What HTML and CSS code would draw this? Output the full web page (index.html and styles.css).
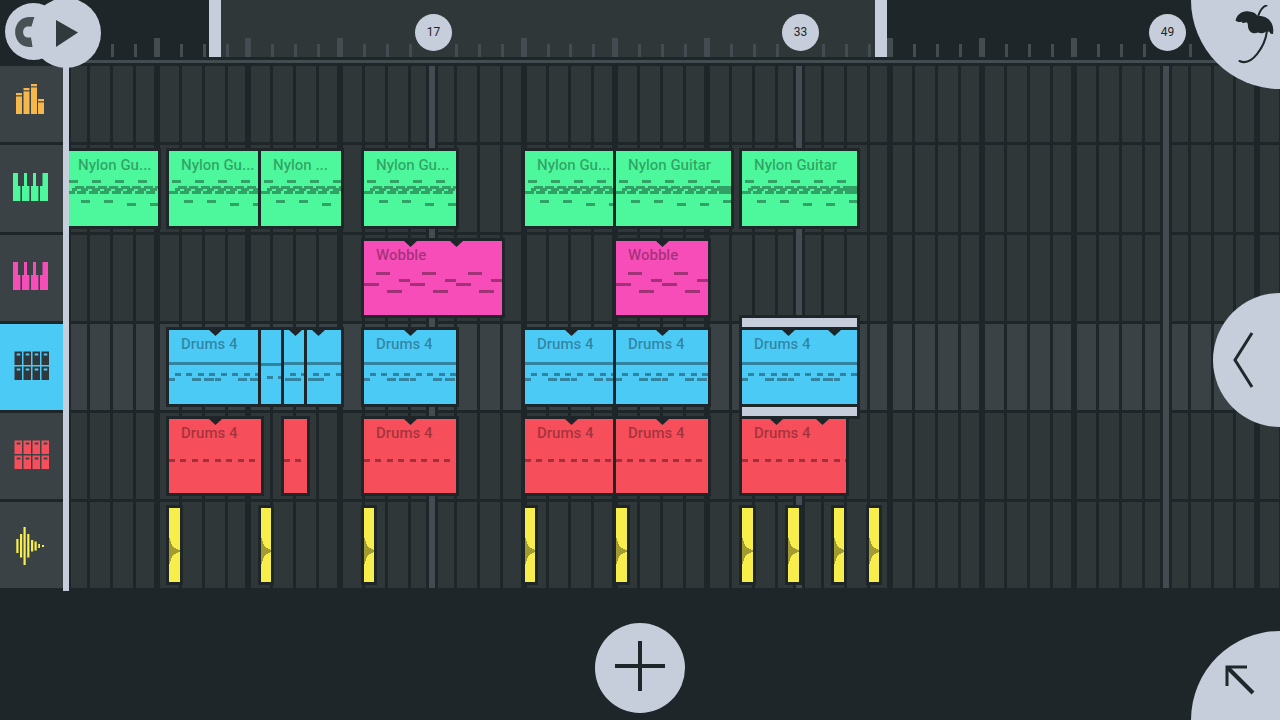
FILE: index.html
```html
<!DOCTYPE html>
<html lang="en">
<head>
    <meta charset="UTF-8">
    <meta name="viewport" content="width=device-width, initial-scale=1.0">
    <title>Playlist</title>
    <link rel="stylesheet" href="styles.css">
</head>
<body>
    <main class="arranger">
        <div class="ruler-head"></div>
        <div class="ruler">
            <div class="ticks" id="ticks"></div>
            <div class="divider"></div>
        </div>

        <div class="track-heads">
            <button class="head head-first orange" aria-label="Mixer">
                <svg width="37" height="40" viewBox="0 0 37 40">
                    <path d="M3 9h6v2h-6zM10.500 4h6v2h-6zM18 0h6v2h-6zM25 15h6v2h-6z"/>
                    <path d="M3 12.500h6v17.500h-6zM10.500 7.500h6v22.500h-6zM18 3.500h6v26.500h-6zM25 18.500h6v11.500h-6z"/>
                    <path opacity=".3" d="M3 11h6v1.500h-6zM10.500 6h6v1.500h-6zM18 2h6v1.500h-6zM25 17h6v1.500h-6z"/>
                </svg>
            </button>
            <button class="head green" aria-label="Nylon Guitar track">
                <svg width="37" height="40" viewBox="0 0 37 40">
                    <path d="M0 4h5v13h2.400v15H0zM11 4h3v13h2.400v15H9V17h2zM20 4h3v13h2.400v15H18V17h2zM29.500 4H35v28h-8V17h2.500z"/>
                </svg>
            </button>
            <button class="head pink" aria-label="Wobble track">
                <svg width="37" height="40" viewBox="0 0 37 40">
                    <path d="M0 4h5v13h2.400v15H0zM11 4h3v13h2.400v15H9V17h2zM20 4h3v13h2.400v15H18V17h2zM29.500 4H35v28h-8V17h2.500z"/>
                </svg>
            </button>
            <button class="head blue selected" aria-label="Drums 4 track, selected">
                <svg width="37" height="40" viewBox="0 0 37 40">
                    <path fill-rule="evenodd" d="M1.500 4.500h7.500v13.500h-7.500zM3.700 6.500v2h3.600v-2zM10.500 4.500h7.500v13.500h-7.500zM12.700 6.500v2h3.600v-2zM19.500 4.500h7.500v13.500h-7.500zM21.700 6.500v2h3.600v-2zM28.500 4.500h7.500v13.500h-7.500zM30.700 6.500v2h3.600v-2zM1.500 19.500h7.500v13.500h-7.500zM3.700 21.500v2h3.600v-2zM10.500 19.500h7.500v13.500h-7.500zM12.700 21.500v2h3.600v-2zM19.500 19.500h7.500v13.500h-7.500zM21.700 21.500v2h3.600v-2zM28.500 19.500h7.500v13.500h-7.500zM30.700 21.500v2h3.600v-2z"/>
                </svg>
            </button>
            <button class="head red" aria-label="Drums 4 track">
                <svg width="37" height="40" viewBox="0 0 37 40">
                    <path fill-rule="evenodd" d="M1.500 4.500h7.500v13.500h-7.500zM3.700 6.500v2h3.600v-2zM10.500 4.500h7.500v13.500h-7.500zM12.700 6.500v2h3.600v-2zM19.500 4.500h7.500v13.500h-7.500zM21.700 6.500v2h3.600v-2zM28.500 4.500h7.500v13.500h-7.500zM30.700 6.500v2h3.600v-2zM1.500 19.500h7.500v13.500h-7.500zM3.700 21.500v2h3.600v-2zM10.500 19.500h7.500v13.500h-7.500zM12.700 21.500v2h3.600v-2zM19.500 19.500h7.500v13.500h-7.500zM21.700 21.500v2h3.600v-2zM28.500 19.500h7.500v13.500h-7.500zM30.700 21.500v2h3.600v-2z"/>
                </svg>
            </button>
            <button class="head yellow" aria-label="Audio track">
                <svg width="37" height="40" viewBox="0 0 37 40">
                    <path d="M3.300 14h2.200v14h-2.200zM7 9h2.200v23.400h-2.200zM10.500 2h2.200v38h-2.200zM14.200 9h2.200v23.400h-2.200zM18 15h2.200v11.500h-2.200zM21.500 16.500h2.200v9h-2.200zM25.200 19h1.800v4h-1.800zM29 20h2v2h-2z"/>
                </svg>
            </button>
            <div class="playhead"></div>
        </div>

        <div class="lanes">
            <div class="lane lane-first"></div>
            <div class="lane green" data-track="guitar"></div>
            <div class="lane pink" data-track="wobble"></div>
            <div class="lane blue selected" data-track="drums"></div>
            <div class="lane red" data-track="kick"></div>
            <div class="lane yellow" data-track="audio"></div>
            <div class="grid" id="grid"></div>
        </div>
    </main>

    <footer>
        <button class="round add" aria-label="Add track">
            <svg width="50" height="50" viewBox="0 0 50 50"><path d="M25 0v50M0 25h50"/></svg>
        </button>
    </footer>

    <button class="round snap" aria-label="Snap">
        <svg width="20" height="30" viewBox="0 0 20 30">
            <path d="M19.500 0L17 9.500h-4C6.500 9.500 6.500 20.500 13 20.500h3.200L17.500 30H14C-4.500 29-4.500 1 14 0z"/>
        </svg>
    </button>
    <button class="round play" aria-label="Play">
        <svg width="22" height="27" viewBox="0 0 22 27"><path d="M0 0l22 12.500L0 27z"/></svg>
    </button>
    <button class="round corner song" aria-label="Song menu">
        <svg width="40" height="60" viewBox="0 0 40 60">
            <path d="M.500 15.500C1.500 9.500 8 5 14 6.500c4 .200 7 1.800 8.500 4.500 6-.500 12 2 14.500 8 1.500 4 1.500 7 1 10l-2.500-.300c-.500-2-2-2.700-4-2.500-3 2.500-6 2.500-8.500 1.300-4 1.500-8 .500-9.500-3.500-1-3 0-5-1.500-6.500-1.500-.500-3 .700-5 .500l.500-1.500c-2 .700-4.500 1-7-1z"/>
            <path class="line" d="M31.500.500c-4.500 1-6.500 5-8.500 11M32 26C30 41 17 62 4.500 56"/>
        </svg>
    </button>
    <button class="round side" aria-label="Open side panel">
        <svg width="22" height="56" viewBox="0 0 22 56"><path d="M19 1L2 28l17 27"/></svg>
    </button>
    <button class="round corner tools" aria-label="Select tool">
        <svg width="30" height="30" viewBox="0 0 30 30">
            <path d="M2 21V2h20"/>
            <path class="shaft" d="M3 3l25 25"/>
        </svg>
    </button>

    <script src="script.js"></script>
</body>
</html>
```

FILE: styles.css
```css
/* General Reset */
* {
    margin: 0;
    padding: 0;
    box-sizing: border-box;
}

:root {
    --bg: #1f2629;
    --cell: #2f3739;
    --panel: #3a4246;
    --line: #434c50;
    --light: #c7cedb;
}

body {
    display: flex;
    flex-direction: column;
    position: relative;
    min-height: 100vh;
    overflow: hidden;
    background-color: var(--bg);
    font-family: Roboto, sans-serif;
}

button {
    border: none;
    font-family: inherit;
    cursor: pointer;
}

svg {
    display: block;
    flex-shrink: 0;
}

/* Track colors */
.orange { --tint: #f7b84b; }
.green { --tint: #4cf89b; }
.pink { --tint: #f74db8; }
.blue { --tint: #4ccaf6; }
.red { --tint: #f74e5b; }
.yellow { --tint: #f8ee4b; }

/* Arranger */
.arranger {
    display: grid;
    grid-template-columns: 66px 1fr;
}

.ruler {
    position: relative;
    overflow: hidden;
    padding-bottom: 3px;
}

.ticks {
    position: relative;
    height: 57px;
    margin-bottom: 3px;
}

.tick {
    position: absolute;
    bottom: 0;
    width: 3px;
    height: 13px;
    background-color: var(--line);
}

.tick.big {
    width: 6px;
    height: 19px;
}

.loop {
    position: absolute;
    top: 0;
    height: 57px;
    background-color: var(--cell);
}

.loop-end {
    position: absolute;
    top: 0;
    width: 12px;
    height: 57px;
    background-color: var(--light);
}

.bar-number {
    position: absolute;
    top: 14px;
    width: 37px;
    height: 37px;
    border-radius: 50%;
    background-color: var(--light);
    color: #1f2629;
    font-size: 12px;
    line-height: 37px;
    text-align: center;
}

.divider {
    height: 3px;
    background-color: var(--line);
}

/* Track headers */
.track-heads {
    position: relative;
    display: flex;
    flex-direction: column;
    gap: 3px;
    padding-right: 3px;
}

.head {
    display: flex;
    justify-content: center;
    align-items: center;
    height: 86px;
    background-color: var(--panel);
}

.head.green {
    height: 87px;
}

.head-first {
    height: 76px;
}

.head svg {
    fill: var(--tint);
}

.head.selected {
    background-color: var(--tint);
}

.head.selected svg {
    fill: #30383b;
}

.playhead {
    position: absolute;
    top: 0;
    right: -3px;
    bottom: -3px;
    width: 6px;
    background-color: var(--light);
    z-index: 3;
}

/* Lanes */
.lanes {
    position: relative;
    display: flex;
    flex-direction: column;
    gap: 3px;
    overflow: hidden;
}

.lane {
    position: relative;
    height: 86px;
    background-color: var(--cell);
}

.lane.green {
    height: 87px;
}

.lane.lane-first {
    height: 76px;
}

.lane.selected {
    background-color: var(--panel);
}

.grid {
    position: absolute;
    inset: 0;
}

.grid-line {
    position: absolute;
    top: 0;
    bottom: 0;
    width: 3px;
    background-color: var(--bg);
}

.grid-line.beat {
    width: 6px;
}

.grid-line.major {
    width: 12px;
    border: solid var(--bg);
    border-width: 0 3px;
    background-color: var(--line);
}

/* Clips */
.clip {
    position: absolute;
    top: 6px;
    bottom: 6px;
    z-index: 1;
    background-color: var(--tint);
    box-shadow: 0 0 0 3px var(--bg);
    text-align: left;
}

.clip-label {
    position: absolute;
    top: 0;
    left: 12px;
    color: rgba(0, 0, 0, 0.35);
    font-size: 15px;
    font-weight: 500;
    line-height: 28px;
    white-space: nowrap;
}

.clip svg {
    position: absolute;
    top: 0;
    left: 0;
    width: 100%;
    height: 100%;
    overflow: hidden;
    fill: rgba(0, 0, 0, 0.35);
}

.clip svg .notch {
    fill: var(--bg);
}

.clip.active {
    z-index: 2;
}

.clip.active::before,
.clip.active::after {
    content: "";
    position: absolute;
    left: 0;
    right: 0;
    height: 9px;
    background-color: var(--light);
    box-shadow: 0 0 0 3px var(--bg);
}

.clip.active::before {
    top: -12px;
}

.clip.active::after {
    bottom: -12px;
}

/* Footer */
footer {
    display: flex;
    justify-content: center;
    padding-top: 35px;
}

/* Round buttons */
.round {
    display: flex;
    justify-content: center;
    align-items: center;
    border-radius: 50%;
    background-color: var(--light);
}

.round svg {
    fill: #20272a;
}

.add {
    width: 90px;
    height: 90px;
    padding-bottom: 5px;
}

.add svg,
.side svg,
.tools svg {
    fill: none;
    stroke: #20272a;
    stroke-width: 4;
}

.snap {
    position: absolute;
    top: 3px;
    left: 5px;
    width: 57px;
    height: 57px;
    justify-content: flex-start;
    padding-left: 10px;
}

.snap svg {
    fill: #485154;
}

.play {
    position: absolute;
    top: -2px;
    left: 31px;
    width: 70px;
    height: 70px;
    padding-left: 2px;
    z-index: 4;
}

.play svg {
    fill: #30393c;
}

.corner {
    position: absolute;
    right: 0;
    width: 89px;
    height: 89px;
    z-index: 4;
}

.song {
    top: 0;
    border-radius: 0 0 0 100%;
    align-items: flex-start;
    justify-content: flex-end;
    padding: 5px 5px 0 0;
}

.song .line {
    fill: none;
    stroke: #20272a;
    stroke-width: 2;
    stroke-linecap: round;
}

.side {
    position: absolute;
    right: 0;
    top: 50%;
    width: 67px;
    height: 134px;
    margin-top: -67px;
    border-radius: 67px 0 0 67px;
    justify-content: flex-start;
    padding-left: 20px;
    z-index: 4;
}

.side svg {
    stroke-width: 3;
}

.tools {
    bottom: 0;
    border-radius: 100% 0 0 0;
    padding-left: 8px;
    padding-top: 8px;
}

.tools svg {
    stroke-width: 3;
}

.tools .shaft {
    stroke-width: 4;
}
```

FILE: script.js
```js
const BAR = 22.93;
const x = (bars) => Math.round(bars * BAR);

const clips = {
    guitar: [
        { start: 0, end: 4, label: 'Nylon Gu...' },
        { start: 4.5, end: 8.5, label: 'Nylon Gu...' },
        { start: 8.5, end: 12, label: 'Nylon ...' },
        { start: 13, end: 17, label: 'Nylon Gu...' },
        { start: 20, end: 24, label: 'Nylon Gu...' },
        { start: 24, end: 29, label: 'Nylon Guitar' },
        { start: 29.5, end: 34.5, label: 'Nylon Guitar' }
    ],
    wobble: [
        { start: 13, end: 19, label: 'Wobble', loops: [2, 4] },
        { start: 24, end: 28, label: 'Wobble', loops: [2] }
    ],
    drums: [
        { start: 4.5, end: 8.5, label: 'Drums 4', loops: [2] },
        { start: 8.5, end: 9.5, fill: true },
        { start: 9.5, end: 10.5, loops: [0.5], offset: 1.5 },
        { start: 10.5, end: 12, loops: [0.5], offset: 1.5 },
        { start: 13, end: 17, label: 'Drums 4', loops: [2] },
        { start: 20, end: 24, label: 'Drums 4', loops: [2] },
        { start: 24, end: 28, label: 'Drums 4', loops: [2] },
        { start: 29.5, end: 34.5, label: 'Drums 4', loops: [2, 4], active: true }
    ],
    kick: [
        { start: 4.5, end: 8.5, label: 'Drums 4', loops: [2] },
        { start: 9.5, end: 10.5 },
        { start: 13, end: 17, label: 'Drums 4', loops: [2] },
        { start: 20, end: 24, label: 'Drums 4', loops: [2] },
        { start: 24, end: 28, label: 'Drums 4', loops: [2] },
        { start: 29.5, end: 34, label: 'Drums 4', loops: [1.5, 3.5] }
    ],
    audio: [4.5, 8.5, 13, 20, 24, 29.5, 31.5, 33.5, 35].map((start) => ({ start, end: start + 0.45 }))
};

const rect = (left, top, width, height = 3) =>
    `<rect x="${Math.round(left)}" y="${top}" width="${Math.round(width)}" height="${height}"/>`;

// Same note repeated every `step` pixels
function repeat(left, top, width, step, total) {
    let out = '';
    for (let i = left; i < total; i += step) {
        out += rect(i, top, width);
    }
    return out;
}

const patterns = {
    guitar(clip, width) {
        let d = '';
        // Overlapping picked notes in the middle, solid after four and a half bars
        for (let i = 0; i < 9; i++) {
            const s = x(i / 2);
            d += `M${s} 40h9v3h-9zM${s + 6} 37h5v3h-5zM${s + 9} 35h9v3h-9zM${s + 15} 38h4v2h-4z`;
        }
        d += `M${x(4.5)} 35h30v8h-30z`;
        let low = '';
        [[15, 49], [38, 49], [61, 52], [84, 52], [107, 49]].forEach(([left, top]) => {
            low += rect(left, top, 9);
        });
        return repeat(3, 29, 9, BAR, width) + `<path d="${d}"/>` + low;
    },
    wobble(clip, width) {
        const step = BAR * 2;
        return repeat(12, 31, 14, step, width) + repeat(35, 38, 11, step, width) +
            repeat(0, 42, 15, step, width) + repeat(23, 49, 15, step, width);
    },
    drums(clip, width) {
        if (clip.fill) {
            return rect(0, 33, width) + repeat(6, 46, 6, BAR / 2, width);
        }
        const step = BAR * 2;
        const shift = (clip.offset || 0) * BAR;
        return rect(0, 32, width) + repeat(6, 43, 6, BAR / 2, width) +
            repeat(0 - shift, 48, 6, step, width) + repeat(23 - shift, 48, 9, step, width) +
            repeat(35 - shift, 48, 10, step, width);
    },
    kick(clip, width) {
        return repeat(0, 40, 6, BAR / 2, width);
    },
    audio() {
        return '<path d="M0 30h1v3h1v3h1v2h1v1h1v1h2v1h2v1h3v2h-3v1h-2v1h-2v1h-1v1h-1v2h-1v3h-1v3h-1z"/>';
    }
};

function addDiv(parent, className, left) {
    const el = document.createElement('div');
    el.className = className;
    el.style.left = left + 'px';
    parent.appendChild(el);
    return el;
}

// Ruler
const ticks = document.getElementById('ticks');
const barCount = Math.ceil(ticks.clientWidth / BAR) + 1;
const loop = addDiv(ticks, 'loop', x(6.5));
loop.style.width = x(35.5) - x(6.5) + 'px';
for (let b = 1; b < barCount; b++) {
    if (b % 16 === 0) {
        addDiv(ticks, 'bar-number', x(b) - 18).textContent = b + 1;
    } else if (b % 4 === 0) {
        addDiv(ticks, 'tick big', x(b) - 4);
    } else {
        addDiv(ticks, 'tick', x(b) - 1);
    }
}
addDiv(ticks, 'loop-end', x(6.5) - 6);
addDiv(ticks, 'loop-end', x(35.5) - 5);

// Grid
const grid = document.getElementById('grid');
for (let b = 0; b < barCount; b++) {
    if (b % 16 === 0) {
        addDiv(grid, 'grid-line major', x(b) - 7);
    } else if (b % 4 === 0) {
        addDiv(grid, 'grid-line beat', x(b) - 4);
    } else {
        addDiv(grid, 'grid-line', x(b) - 2);
    }
}

// Clips
document.querySelectorAll('[data-track]').forEach((lane) => {
    const track = lane.dataset.track;
    clips[track].forEach((clip) => {
        const width = x(clip.end) - x(clip.start);
        const notches = (clip.loops || [])
            .map((b) => `<path class="notch" d="M${x(b) - 6} 0h13l-6.500 6z"/>`)
            .join('');
        const el = document.createElement('button');
        el.className = clip.active ? 'clip active' : 'clip';
        el.style.left = x(clip.start) + 'px';
        el.style.width = width + 'px';
        el.innerHTML = `<svg>${patterns[track](clip, width)}${notches}</svg>`;
        if (clip.label) {
            el.innerHTML += `<span class="clip-label">${clip.label}</span>`;
        } else {
            el.setAttribute('aria-label', 'Clip');
        }
        lane.appendChild(el);
    });
});
```
